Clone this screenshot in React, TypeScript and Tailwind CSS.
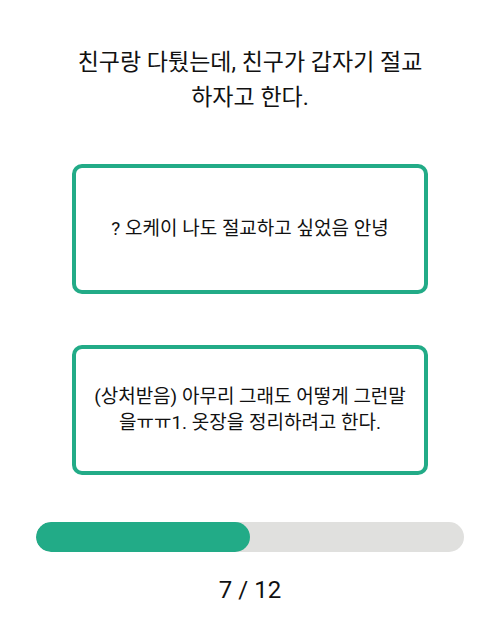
const font = { fontFamily: 'Roboto, "Noto Sans CJK KR", sans-serif' };

function Choice({ children }: { children: React.ReactNode }) {
  return (
    <button className="flex h-[130px] w-[356px] items-center justify-center rounded-[10px] border-4 border-[#22ab87] bg-white px-3 text-center text-[19px] leading-[26px] text-[#111]">
      {children}
    </button>
  );
}

export default function App() {
  const step = 7;
  const total = 12;

  return (
    <div className="flex h-[626px] w-[500px] flex-col items-center bg-white" style={font}>
      <h1 className="mt-[45px] text-center text-[23px] font-normal leading-[35px] text-[#111]">
        친구랑 다퉜는데, 친구가 갑자기 절교
        <br />
        하자고 한다.
      </h1>

      <div className="mt-[49px] flex flex-col items-center gap-[51px]">
        <Choice>? 오케이 나도 절교하고 싶었음 안녕</Choice>
        <Choice>
          (상처받음) 아무리 그래도 어떻게 그런말
          <br />
          을ㅠㅠ1. 옷장을 정리하려고 한다.
        </Choice>
      </div>

      <div className="mt-[47px] h-[30px] w-[428px] overflow-hidden rounded-full bg-[#e0e0de]">
        <div className="h-full rounded-full bg-[#22ab87]" style={{ width: '50%' }} />
      </div>

      <p className="mt-[22px] text-[24px] leading-[32px] text-[#111]">
        {step} / {total}
      </p>
    </div>
  );
}
